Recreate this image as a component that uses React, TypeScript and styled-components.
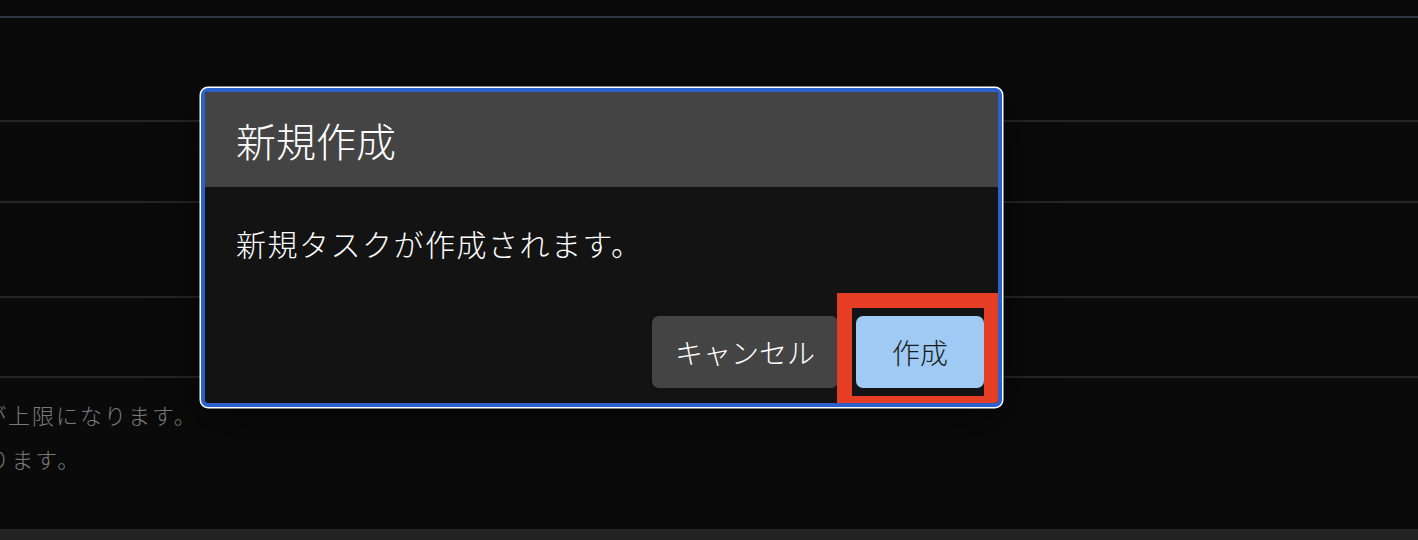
import styled, { createGlobalStyle } from 'styled-components';

const GlobalStyle = createGlobalStyle`
  html, body {
    margin: 0;
    padding: 0;
    background: #0a0a0a;
  }
  body {
    font-family: 'Noto Sans CJK JP', 'Noto Sans', sans-serif;
  }
`;

type RowProps = { $height: number; $accent?: boolean };

const rows: RowProps[] = [
  { $height: 16, $accent: true },
  { $height: 102 },
  { $height: 79 },
  { $height: 93 },
  { $height: 78 },
];

const notes = [
  { text: '一日十件までが上限になります。', indent: -160 },
  { text: '翌日以降となります。', indent: -156 },
];

export default function App() {
  return (
    <>
      <GlobalStyle />
      <Page>
        <List>
          {rows.map((row, i) => (
            <Row key={i} $height={row.$height} $accent={row.$accent} />
          ))}
        </List>
        <Notes>
          {notes.map((note) => (
            <NoteLine key={note.text} $indent={note.indent}>
              {note.text}
            </NoteLine>
          ))}
        </Notes>
        <Footer />

        <Dialog role='dialog' aria-labelledby='dialog-title'>
          <DialogHeader>
            <Title id='dialog-title'>新規作成</Title>
          </DialogHeader>
          <DialogBody>
            <Message>新規タスクが作成されます。</Message>
            <Actions>
              <Button type='button'>キャンセル</Button>
              <Button type='button' $primary $highlighted>
                作成
              </Button>
            </Actions>
          </DialogBody>
        </Dialog>
      </Page>
    </>
  );
}

const Page = styled.div`
  position: relative;
  display: flex;
  flex-direction: column;
  width: 100%;
  height: 540px;
  overflow: hidden;
  background: #0a0a0a;
`;

const List = styled.div`
  display: flex;
  flex-direction: column;
`;

const Row = styled.div<RowProps>`
  height: ${(p) => p.$height}px;
  border-bottom: 2px solid ${(p) => (p.$accent ? '#2c3844' : '#262626')};
`;

const Notes = styled.div`
  flex: 1;
  display: flex;
  flex-direction: column;
  padding-top: 14px;
`;

const NoteLine = styled.p<{ $indent: number }>`
  margin: 0 0 0 ${(p) => p.$indent}px;
  font-size: 22px;
  font-weight: 300;
  line-height: 44px;
  letter-spacing: 2px;
  white-space: nowrap;
  color: #7a7a7a;
`;

const Footer = styled.div`
  height: 11px;
  background: #222222;
`;

const Dialog = styled.section`
  position: absolute;
  top: 88px;
  left: 201px;
  width: 801px;
  height: 319px;
  box-sizing: border-box;
  display: flex;
  flex-direction: column;
  border: 4px solid #2a61cb;
  border-radius: 7px;
  overflow: hidden;
  background: #131313;
  box-shadow: 0 0 0 1.5px #ffffff, 0 12px 48px rgba(0, 0, 0, 0.55);
`;

const DialogHeader = styled.header`
  display: flex;
  align-items: center;
  height: 95px;
  padding-left: 31px;
  background: #444444;
`;

const Title = styled.h2`
  margin: 0;
  font-size: 40px;
  font-weight: 300;
  line-height: 1;
  color: #ffffff;
`;

const DialogBody = styled.div`
  flex: 1;
  display: flex;
  flex-direction: column;
  justify-content: space-between;
  padding: 38px 14px 15px 31px;
`;

const Message = styled.p`
  margin: 0;
  font-size: 30px;
  font-weight: 300;
  line-height: 36px;
  letter-spacing: 1.5px;
  color: #ffffff;
`;

const Actions = styled.div`
  display: flex;
  justify-content: flex-end;
  gap: 18px;
`;

const Button = styled.button<{ $primary?: boolean; $highlighted?: boolean }>`
  position: relative;
  height: 72px;
  width: ${(p) => (p.$primary ? 128 : 186)}px;
  padding: 0;
  border: none;
  border-radius: 7px;
  font-family: 'Noto Sans CJK JP', 'Noto Sans', sans-serif;
  font-size: 28px;
  font-weight: 300;
  background: ${(p) => (p.$primary ? '#9ecaf3' : '#444444')};
  color: ${(p) => (p.$primary ? '#1c1c1c' : '#ffffff')};
  cursor: pointer;

  &::after {
    content: '';
    display: ${(p) => (p.$highlighted ? 'block' : 'none')};
    position: absolute;
    top: -23px;
    bottom: -23px;
    left: -19px;
    right: -15px;
    border: 15px solid #e53e25;
    pointer-events: none;
  }
`;
